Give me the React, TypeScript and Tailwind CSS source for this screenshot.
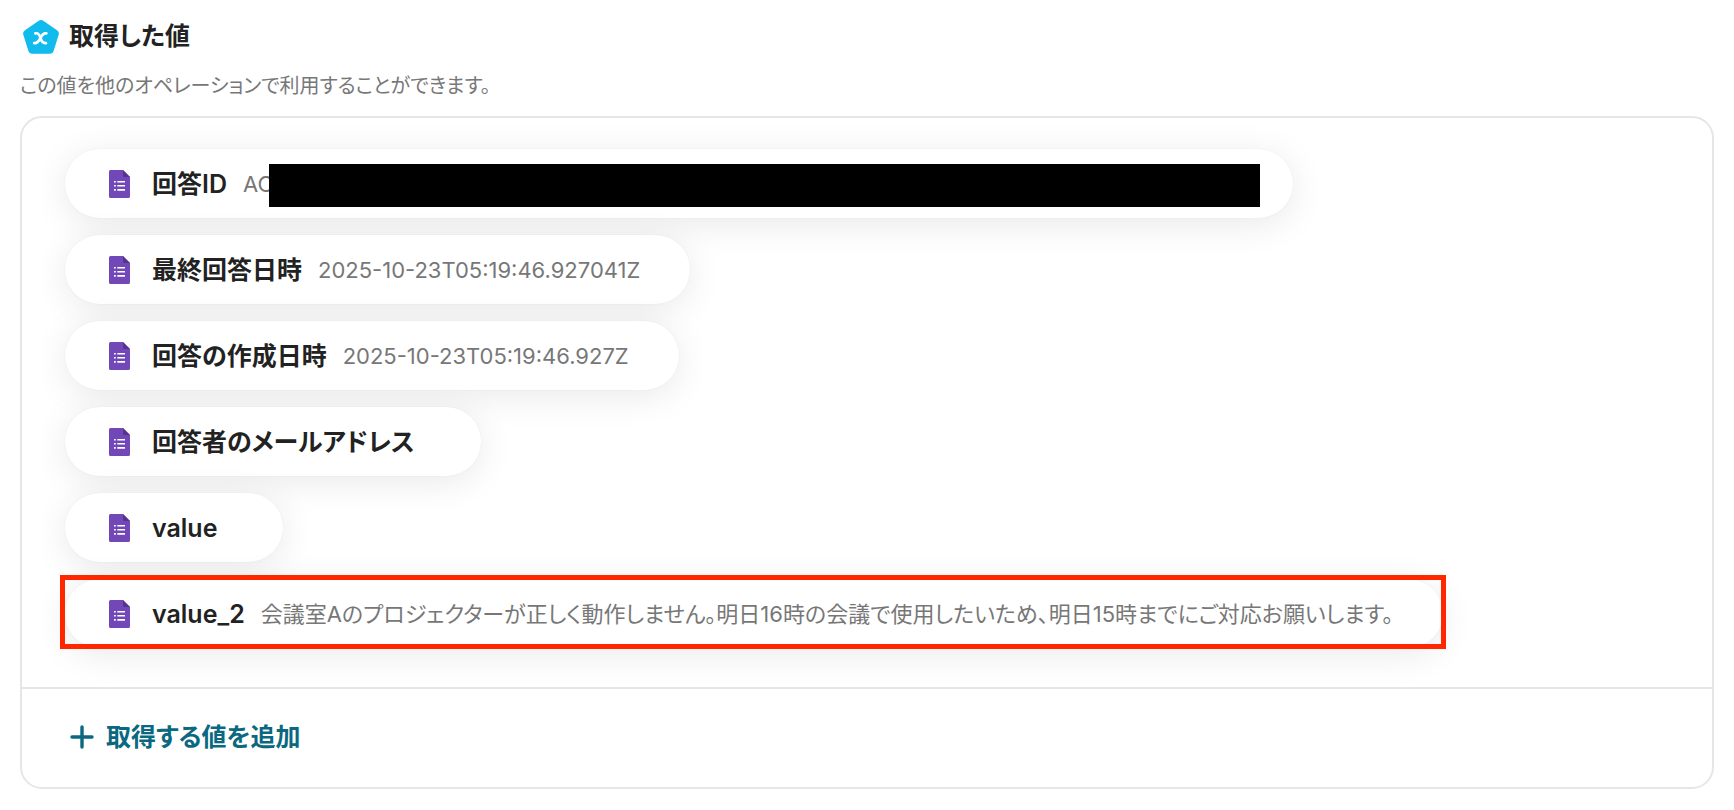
import React from "react";

interface OutputValue {
  label: string;
  value?: string;
  masked?: boolean;
  highlighted?: boolean;
}

const outputs: OutputValue[] = [
  { label: "回答ID", value: "AC", masked: true },
  { label: "最終回答日時", value: "2025-10-23T05:19:46.927041Z" },
  { label: "回答の作成日時", value: "2025-10-23T05:19:46.927Z" },
  { label: "回答者のメールアドレス" },
  { label: "value" },
  {
    label: "value_2",
    value:
      "会議室Aのプロジェクターが正しく動作しません。明日16時の会議で使用したいため、明日15時までにご対応お願いします。",
    highlighted: true,
  },
];

const App: React.FC = () => {
  return (
    <main className="min-h-screen bg-white px-5 pt-4 pb-5 font-['Inter','Noto_Sans_CJK_JP',sans-serif] text-[#222222] [font-feature-settings:'palt']">
      <header>
        <div className="flex items-center gap-[10px] pl-[3px]">
          <PentagonIcon />
          <h1 className="text-[25px] leading-10 font-semibold">取得した値</h1>
        </div>
        <p className="mt-4 text-[20px] leading-7 text-[#777777]">
          この値を他のオペレーションで利用することができます。
        </p>
      </header>

      <section className="mt-4 rounded-[22px] border-2 border-[#e6e6e6]">
        <ul className="flex flex-col items-start gap-[17px] px-[43px] pt-[31px] pb-[39px]">
          {outputs.map((output) => (
            <OutputPill key={output.label} {...output} />
          ))}
        </ul>
        <div className="border-t-2 border-[#e6e6e6] px-12 pt-7 pb-[30px]">
          <button
            type="button"
            className="flex items-center gap-3 text-[25px] leading-10 font-semibold text-[#0a6880]"
          >
            <PlusIcon />
            取得する値を追加
          </button>
        </div>
      </section>
    </main>
  );
};

export default App;

const OutputPill = ({ label, value, masked, highlighted }: OutputValue) => (
  <li className="relative flex min-h-[69px] items-center rounded-full bg-white pr-[50px] pl-11 shadow-[0_0_2px_rgba(0,0,0,0.06),0_6px_36px_rgba(0,0,0,0.09)]">
    <FormIcon />
    <span className="ml-[22px] text-[25px] leading-9 font-semibold whitespace-nowrap">
      {label}
    </span>
    <span className="relative ml-4 text-[22px] leading-9 text-[#777777]">
      {masked ? (
        <span className="block w-[1000px]">
          {value}
          <span className="absolute -top-[2px] -right-[17px] -bottom-[5px] left-[26px] bg-black" />
        </span>
      ) : (
        value
      )}
    </span>
    {highlighted && (
      <span className="pointer-events-none absolute -top-1 -right-[3px] -bottom-px -left-[5px] border-5 border-[#ff2600]" />
    )}
  </li>
);

const FormIcon = () => (
  <svg className="h-7 w-[21px] shrink-0" viewBox="0 0 21 28" aria-hidden="true">
    <path
      d="M1.5 0H14l7 7v19.5a1.5 1.5 0 0 1-1.5 1.5h-18A1.5 1.5 0 0 1 0 26.5v-25A1.5 1.5 0 0 1 1.5 0z"
      fill="#7248b9"
    />
    <path d="M14 0l7 7h-5.5A1.5 1.5 0 0 1 14 5.5z" fill="#54358c" />
    <path
      d="M5 10.9h1.8v1.6H5zM8.3 10.9H16v1.6H8.3zM5 15h1.8v1.6H5zM8.3 15H16v1.6H8.3zM5 19.1h1.8v1.6H5zM8.3 19.1H16v1.6H8.3z"
      fill="#ffffff"
    />
  </svg>
);

const PentagonIcon = () => (
  <svg className="mt-[2px] h-9 w-9 shrink-0" viewBox="0 0 36 36" aria-hidden="true">
    <path
      d="M15.7 1.7a4 4 0 0 1 4.6 0L34 11.2a4 4 0 0 1 1.7 4.5L30.6 32a4 4 0 0 1-3.8 2.8H9.2A4 4 0 0 1 5.4 32L.3 15.7A4 4 0 0 1 2 11.2z"
      fill="#12bbee"
    />
    <path
      d="M12.4 14.4c2.9-.7 4 .9 5.1 4.5 1.1 3.6 2.3 5.7 5.5 5.2M23.4 14.4c-3.2-.5-4.7 1.9-5.9 4.5-1.2 2.7-2.8 5.5-6.3 5.2"
      fill="none"
      stroke="#ffffff"
      strokeWidth="2.7"
      strokeLinecap="round"
    />
  </svg>
);

const PlusIcon = () => (
  <svg className="h-6 w-6 shrink-0" viewBox="0 0 24 24" aria-hidden="true">
    <path
      d="M12 2v20M2 12h20"
      fill="none"
      stroke="currentColor"
      strokeWidth="3.4"
      strokeLinecap="round"
    />
  </svg>
);
